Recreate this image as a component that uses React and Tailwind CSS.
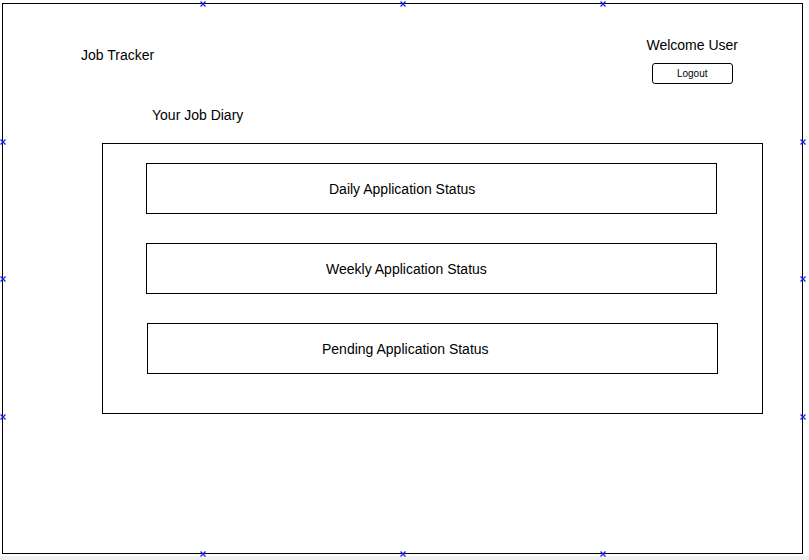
import React from 'react';

// selection handles drawn on the frame border (x, y in page pixels)
const handles = [
    [202, 3], [402, 3], [602, 3],
    [2, 141], [2, 278], [2, 416],
    [802, 141], [802, 278], [802, 416],
    [202, 553], [402, 553], [602, 553],
];

const Handle = ({ x, y }) => (
    <svg
        width="6"
        height="6"
        viewBox="0 0 6 6"
        className="absolute"
        style={{ left: x - 2.5 - 3, top: y - 2.5 - 4 }}
    >
        <line x1="0.5" y1="0.5" x2="5.5" y2="5.5" stroke="#1a1aff" strokeWidth="1.2" />
        <line x1="5.5" y1="0.5" x2="0.5" y2="5.5" stroke="#1a1aff" strokeWidth="1.2" />
    </svg>
);

const StatusBox = ({ label, offset, shift }) => (
    <div className={`flex items-center h-[51px] w-[571px] border border-black ${shift}`}>
        <span className={offset}>{label}</span>
    </div>
);

export default function App() {
    return (
        <div
            className="w-[809px] h-[560px] bg-white text-black flex flex-col overflow-hidden"
            style={{ fontFamily: '"Liberation Sans", Arial, sans-serif' }}
        >
            <div className="relative ml-[2px] mt-[3px] w-[801px] h-[551px] border border-black flex flex-col">
                <div className="flex justify-between">
                    <div className="pl-[78px] mt-[43px] text-[14px] leading-[16px]">Job Tracker</div>
                    <div className="flex flex-col items-center pr-[64px] mt-[33px]">
                        <div className="text-[14px] leading-[16px]">Welcome User</div>
                        <button className="mt-[10px] w-[81px] h-[21px] border border-black rounded-[3px] text-[10px] leading-[12px] flex items-center justify-center pt-[1px]">
                            Logout
                        </button>
                    </div>
                </div>

                <div className="pl-[149px] mt-[23px] text-[14px] leading-[16px]">Your Job Diary</div>

                <div className="ml-[99px] mt-[20px] w-[661px] h-[271px] border border-black flex flex-col pl-[43px] pt-[19px] gap-[29px] text-[14px] leading-[16px]">
                    <StatusBox label="Daily Application Status" offset="pl-[182px]" shift="" />
                    <StatusBox label="Weekly Application Status" offset="pl-[179px]" shift="" />
                    <StatusBox label="Pending Application Status" offset="pl-[174px]" shift="ml-[1px]" />
                </div>

                {handles.map(([x, y], i) => (
                    <Handle key={i} x={x} y={y} />
                ))}
            </div>
            <div className="mt-[2px] h-[4px] bg-[#f0f0f0]"></div>
        </div>
    );
}
